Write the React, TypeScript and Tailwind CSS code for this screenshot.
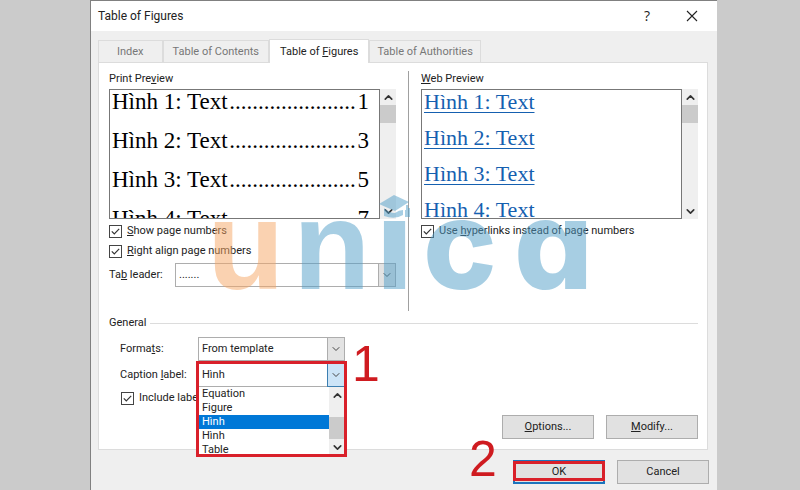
import { ReactNode } from "react";
import { ChevronDown, ChevronUp } from "lucide-react";

const tabs = ["Index", "Table of Contents", "Table of Figures", "Table of Authorities"];

const printLines = [
  { label: "Hình 1: Text", page: 1 },
  { label: "Hình 2: Text", page: 3 },
  { label: "Hình 3: Text", page: 5 },
  { label: "Hình 4: Text", page: 7 },
];

const captionOptions = ["Equation", "Figure", "Hình", "Hình", "Table"];

const ScrollBar = ({ thumb }: { thumb: string }) => (
  <div className="flex w-4 shrink-0 flex-col items-center bg-[#efefef] text-[#333]">
    <button type="button" aria-label="Scroll up" className="flex h-4 w-full items-center justify-center">
      <ChevronUp size={13} strokeWidth={3} />
    </button>
    <div className="min-h-0 w-full flex-1">
      <div className={`w-full bg-[#cbcbcb] ${thumb}`} />
    </div>
    <button type="button" aria-label="Scroll down" className="flex h-4 w-full items-center justify-center">
      <ChevronDown size={13} strokeWidth={3} />
    </button>
  </div>
);

const CheckBox = ({ id, children }: { id: string; children: ReactNode }) => (
  <div className="flex h-5 items-center gap-[5px]">
    <span className="relative flex size-[13px] shrink-0">
      <input
        id={id}
        type="checkbox"
        defaultChecked
        className="peer size-[13px] appearance-none border border-[#444] bg-white"
      />
      <svg
        viewBox="0 0 13 13"
        className="pointer-events-none absolute inset-0 hidden size-[13px] peer-checked:block"
      >
        <path d="M2.8 6.4 5.3 9 10.2 3.8" fill="none" stroke="#333" strokeWidth="1.2" />
      </svg>
    </span>
    <label htmlFor={id} className="whitespace-nowrap">
      {children}
    </label>
  </div>
);

type DropDownProps = {
  id: string;
  value: string;
  active?: boolean;
};

const DropDown = ({ id, value, active }: DropDownProps) => (
  <div className="relative">
    <select
      id={id}
      className="h-6 w-full appearance-none border border-[#adadad] bg-white px-[3px] text-[11px] outline-none"
    >
      <option>{value}</option>
    </select>
    <span
      className={`pointer-events-none absolute inset-y-0 right-0 flex w-[18px] items-center justify-center border ${
        active ? "border-[#3c7fb1] bg-[#cce4f7]" : "border-[#adadad] bg-[#e3e3e3]"
      }`}
    >
      <ChevronDown size={12} strokeWidth={2} className="text-[#444]" />
    </span>
  </div>
);

const DialogButton = ({ children, primary }: { children: ReactNode; primary?: boolean }) => (
  <button
    type="button"
    className={`h-6 w-[92px] bg-[#e1e1e1] ${
      primary ? "border-2 border-[#1c74bd]" : "border border-[#adadad]"
    }`}
  >
    {children}
  </button>
);

const Watermark = () => (
  <svg
    viewBox="0 0 380 100"
    className="pointer-events-none absolute top-[130px] left-[112px] z-10 h-[100px] w-[380px]"
    aria-label="unica"
  >
    <defs>
      <clipPath id="stem">
        <rect x="165" y="28" width="40" height="72" />
      </clipPath>
    </defs>
    <g
      opacity="0.5"
      fill="#519fc9"
      fontFamily="Inter, sans-serif"
      fontSize="124"
      fontWeight="800"
      style={{ fontFeatureSettings: '"cv11"' }}
    >
      <text x="-4" y="96" fill="#f7a765" fontFamily="Liberation Sans, sans-serif" fontSize="127" fontWeight="700">u</text>
      <text x="82" y="96" fontFamily="Liberation Sans, sans-serif" fontSize="127" fontWeight="700">n</text>
      <text x="166" y="96" clipPath="url(#stem)">i</text>
      <text x="212" y="96">c</text>
      <text x="303" y="96">a</text>
      <path d="M168 11 183 2 198 9 184 18Z" />
      <path d="M173 15Q178 20 184 20 188 17 192 17V22Q184 27 173 23Z" />
      <path d="M195 12h2v3h2v9h-5v-7h1z" />
    </g>
  </svg>
);

const App = () => {
  return (
    <div className="min-h-screen bg-[#cbcbcb] pr-[83px] pl-[90px] font-[Roboto,sans-serif] text-[11px] leading-4 text-[#222]">
      <div className="min-h-screen border-t border-l border-[#808080] bg-[#efefef]">
        <header className="flex h-[30px] items-center justify-between bg-white pr-[19px] pl-[7px]">
          <h1 className="text-xs">Table of Figures</h1>
          <div className="flex items-center gap-9">
            <button type="button" aria-label="Help" className="font-['Open_Sans',sans-serif] text-sm">
              ?
            </button>
            <button type="button" aria-label="Close">
              <svg viewBox="0 0 12 12" className="size-3">
                <path d="M1 1 11 11M11 1 1 11" stroke="#222" strokeWidth="1.1" />
              </svg>
            </button>
          </div>
        </header>

        <main className="pt-2 pr-2 pl-[7px]">
          <nav className="flex items-end" role="tablist">
            {tabs.map((tab) => (
              <button
                key={tab}
                type="button"
                role="tab"
                aria-selected={tab === "Table of Figures"}
                className={
                  tab === "Table of Figures"
                    ? "relative z-10 -mb-px h-6 border border-b-0 border-[#dcdcdc] bg-white px-[10px]"
                    : "h-[22px] border border-b-0 border-[#dcdcdc] px-[9px] text-[#777] first:px-[18px] last:px-[7px]"
                }
              >
                {tab === "Table of Figures" ? (
                  <>
                    Table of <u>F</u>igures
                  </>
                ) : (
                  tab
                )}
              </button>
            ))}
          </nav>

          <section className="relative mr-px border border-[#dcdcdc] bg-white pt-2 pr-[9px] pb-[10px] pl-[10px]">
            <Watermark />
            <div className="grid grid-cols-[300fr_289fr]">
              <div className="border-r border-[#a0a0a0] pr-3 pb-6">
                <h2>
                  Print Pre<u>v</u>iew
                </h2>
                <div className="mt-[2px] mb-[2px] flex h-[130px]">
                  <div className="flex min-w-0 flex-1 flex-col gap-[15px] overflow-hidden border border-[#777] px-[2px] font-['Liberation_Serif',serif] text-[23px] leading-6 text-black">
                    {printLines.map((line) => (
                      <div key={line.page} className="flex shrink-0 justify-between pr-2">
                        <span>{line.label}</span>
                        <span>......................</span>
                        <span>{line.page}</span>
                      </div>
                    ))}
                  </div>
                  <ScrollBar thumb="h-[18px]" />
                </div>
                <CheckBox id="show-pages">
                  <u>S</u>how page numbers
                </CheckBox>
                <CheckBox id="align-pages">
                  <u>R</u>ight align page numbers
                </CheckBox>
                <div className="mt-[2px] grid grid-cols-[66px_1fr] items-center">
                  <label htmlFor="tab-leader">
                    Ta<u>b</u> leader:
                  </label>
                  <DropDown id="tab-leader" value="......." />
                </div>
              </div>

              <div className="pl-3">
                <h2>
                  <u>W</u>eb Preview
                </h2>
                <div className="mt-[2px] mb-[2px] flex h-[130px]">
                  <div className="flex min-w-0 flex-1 flex-col items-start gap-3 overflow-hidden border border-[#777] px-[2px] font-['Liberation_Serif',serif] text-[22px] leading-6 text-[#1560b0]">
                    {printLines.map((line) => (
                      <a key={line.page} href="#" className="shrink-0 underline decoration-1 underline-offset-3">
                        {line.label}
                      </a>
                    ))}
                  </div>
                  <ScrollBar thumb="h-[18px]" />
                </div>
                <CheckBox id="hyperlinks">
                  Use <u>h</u>yperlinks instead of page numbers
                </CheckBox>
              </div>
            </div>

            <div className="mt-1 flex items-center gap-1">
              <h2>General</h2>
              <hr className="flex-1 border-[#dcdcdc]" />
            </div>

            <div className="mt-[6px] grid grid-cols-[78px_147px] items-center gap-y-[2px] pl-[11px]">
              <label htmlFor="formats">
                Forma<u>t</u>s:
              </label>
              <DropDown id="formats" value="From template" />
              <label htmlFor="caption-label">
                Caption <u>l</u>abel:
              </label>
              <div className="relative">
                <DropDown id="caption-label" value="Hình" active />
                <div className="absolute inset-x-0 top-6 z-20 flex h-[68px] bg-white">
                  <ul role="listbox" aria-label="Caption label" className="flex-1 overflow-hidden">
                    {captionOptions.map((option, i) => (
                      <li
                        key={i}
                        role="option"
                        aria-selected={i === 2}
                        className={`h-[14px] px-1 leading-[14px] ${i === 2 ? "bg-[#0078d7] text-white" : ""}`}
                      >
                        {option}
                      </li>
                    ))}
                  </ul>
                  <ScrollBar thumb="mt-[14px] h-[22px]" />
                </div>
                <div className="pointer-events-none absolute -inset-x-[2px] -top-[2px] z-30 h-24 border-3 border-[#d9202a]" />
                <span className="absolute -top-6 left-[154px] font-['Liberation_Sans',sans-serif] text-[50px] leading-[50px] text-[#cf1b20]">
                  1
                </span>
              </div>
            </div>
            <div className="mt-px pl-3">
              <CheckBox id="include-label">Include label and number</CheckBox>
            </div>

            <div className="mt-[7px] flex justify-end gap-3">
              <DialogButton>
                <u>O</u>ptions...
              </DialogButton>
              <DialogButton>
                <u>M</u>odify...
              </DialogButton>
            </div>
          </section>

          <footer className="mt-[10px] flex justify-end gap-3">
            <div className="relative">
              <DialogButton primary>OK</DialogButton>
              <div className="pointer-events-none absolute inset-x-0 top-px h-5 border-3 border-[#d9202a]" />
              <span className="absolute -top-[26px] -left-11 font-['Liberation_Sans',sans-serif] text-[50px] leading-[50px] text-[#cf1b20]">
                2
              </span>
            </div>
            <DialogButton>Cancel</DialogButton>
          </footer>
        </main>
      </div>
    </div>
  );
};

export default App;
